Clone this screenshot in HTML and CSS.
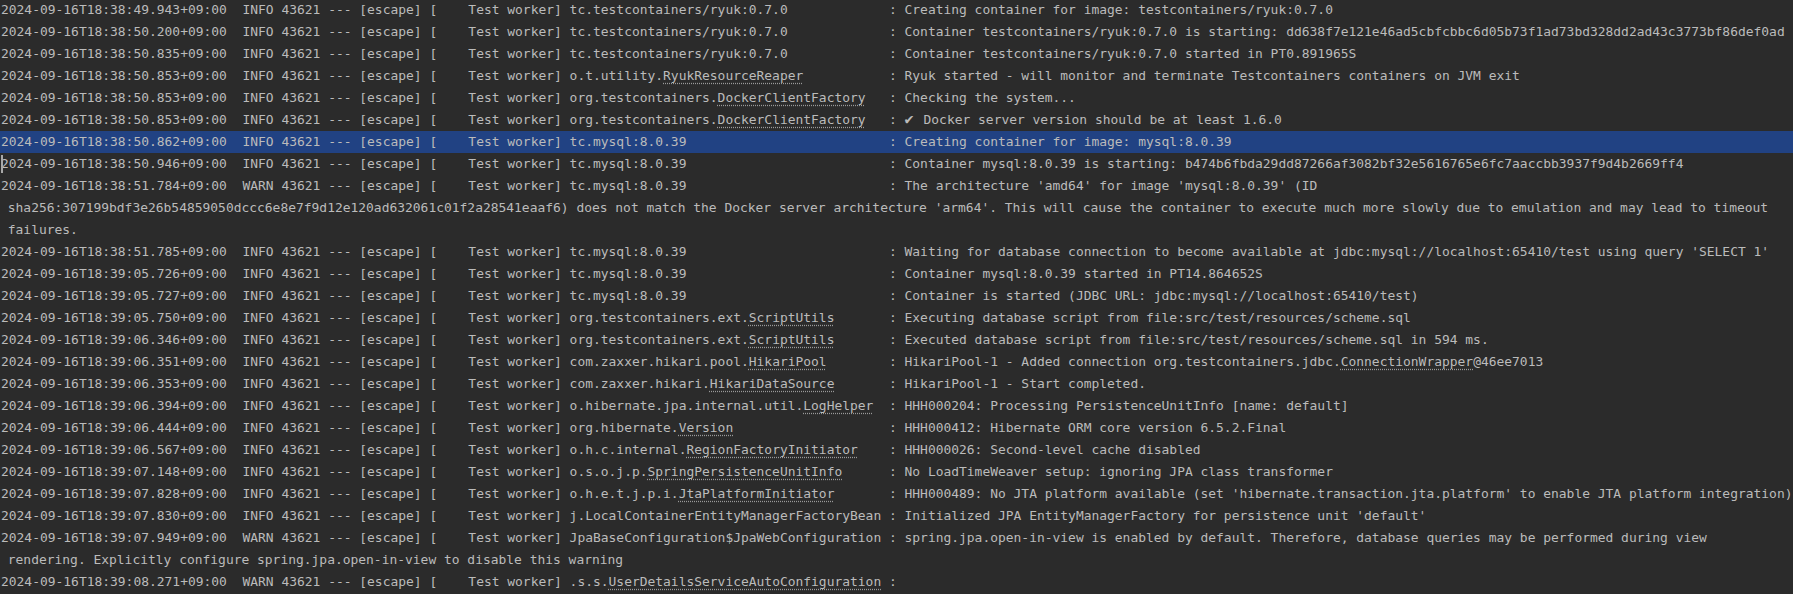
FILE: index.html
```html
<!DOCTYPE html>
<html lang="en">
<head>
<meta charset="utf-8">
<title>Test log</title>
<link rel="stylesheet" href="styles.css">
</head>
<body>
<main class="console">
<div class="row">2024-09-16T18:38:49.943+09:00  INFO 43621 --- [escape] [    Test worker] <span class="logger">tc.testcontainers/ryuk:0.7.0</span> : Creating container for image: testcontainers/ryuk:0.7.0</div>
<div class="row">2024-09-16T18:38:50.200+09:00  INFO 43621 --- [escape] [    Test worker] <span class="logger">tc.testcontainers/ryuk:0.7.0</span> : Container testcontainers/ryuk:0.7.0 is starting: dd638f7e121e46ad5cbfcbbc6d05b73f1ad73bd328dd2ad43c3773bf86def0ad</div>
<div class="row">2024-09-16T18:38:50.835+09:00  INFO 43621 --- [escape] [    Test worker] <span class="logger">tc.testcontainers/ryuk:0.7.0</span> : Container testcontainers/ryuk:0.7.0 started in PT0.891965S</div>
<div class="row">2024-09-16T18:38:50.853+09:00  INFO 43621 --- [escape] [    Test worker] <span class="logger">o.t.utility.<span class="cls">RyukResourceReaper</span></span> : Ryuk started - will monitor and terminate Testcontainers containers on JVM exit</div>
<div class="row">2024-09-16T18:38:50.853+09:00  INFO 43621 --- [escape] [    Test worker] <span class="logger">org.testcontainers.<span class="cls">DockerClientFactory</span></span> : Checking the system...</div>
<div class="row">2024-09-16T18:38:50.853+09:00  INFO 43621 --- [escape] [    Test worker] <span class="logger">org.testcontainers.<span class="cls">DockerClientFactory</span></span> : <span class="check">✔</span>Docker server version should be at least 1.6.0</div>
<div class="row selected">2024-09-16T18:38:50.862+09:00  INFO 43621 --- [escape] [    Test worker] <span class="logger">tc.mysql:8.0.39</span> : Creating container for image: mysql:8.0.39</div>
<div class="row caret">2024-09-16T18:38:50.946+09:00  INFO 43621 --- [escape] [    Test worker] <span class="logger">tc.mysql:8.0.39</span> : Container mysql:8.0.39 is starting: b474b6fbda29dd87266af3082bf32e5616765e6fc7aaccbb3937f9d4b2669ff4</div>
<div class="row">2024-09-16T18:38:51.784+09:00  WARN 43621 --- [escape] [    Test worker] <span class="logger">tc.mysql:8.0.39</span> : The architecture 'amd64' for image 'mysql:8.0.39' (ID</div>
<div class="row wrapped"> sha256:307199bdf3e26b54859050dccc6e8e7f9d12e120ad632061c01f2a28541eaaf6) does not match the Docker server architecture 'arm64'. This will cause the container to execute much more slowly due to emulation and may lead to timeout</div>
<div class="row wrapped"> failures.</div>
<div class="row">2024-09-16T18:38:51.785+09:00  INFO 43621 --- [escape] [    Test worker] <span class="logger">tc.mysql:8.0.39</span> : Waiting for database connection to become available at jdbc:mysql://localhost:65410/test using query 'SELECT 1'</div>
<div class="row">2024-09-16T18:39:05.726+09:00  INFO 43621 --- [escape] [    Test worker] <span class="logger">tc.mysql:8.0.39</span> : Container mysql:8.0.39 started in PT14.864652S</div>
<div class="row">2024-09-16T18:39:05.727+09:00  INFO 43621 --- [escape] [    Test worker] <span class="logger">tc.mysql:8.0.39</span> : Container is started (JDBC URL: jdbc:mysql://localhost:65410/test)</div>
<div class="row">2024-09-16T18:39:05.750+09:00  INFO 43621 --- [escape] [    Test worker] <span class="logger">org.testcontainers.ext.<span class="cls">ScriptUtils</span></span> : Executing database script from file:src/test/resources/scheme.sql</div>
<div class="row">2024-09-16T18:39:06.346+09:00  INFO 43621 --- [escape] [    Test worker] <span class="logger">org.testcontainers.ext.<span class="cls">ScriptUtils</span></span> : Executed database script from file:src/test/resources/scheme.sql in 594 ms.</div>
<div class="row">2024-09-16T18:39:06.351+09:00  INFO 43621 --- [escape] [    Test worker] <span class="logger">com.zaxxer.hikari.pool.<span class="cls">HikariPool</span></span> : HikariPool-1 - Added connection org.testcontainers.jdbc.<span class="cls">ConnectionWrapper</span>@46ee7013</div>
<div class="row">2024-09-16T18:39:06.353+09:00  INFO 43621 --- [escape] [    Test worker] <span class="logger">com.zaxxer.hikari.<span class="cls">HikariDataSource</span></span> : HikariPool-1 - Start completed.</div>
<div class="row">2024-09-16T18:39:06.394+09:00  INFO 43621 --- [escape] [    Test worker] <span class="logger">o.hibernate.jpa.internal.util.<span class="cls">LogHelper</span></span> : HHH000204: Processing PersistenceUnitInfo [name: default]</div>
<div class="row">2024-09-16T18:39:06.444+09:00  INFO 43621 --- [escape] [    Test worker] <span class="logger">org.hibernate.<span class="cls">Version</span></span> : HHH000412: Hibernate ORM core version 6.5.2.Final</div>
<div class="row">2024-09-16T18:39:06.567+09:00  INFO 43621 --- [escape] [    Test worker] <span class="logger">o.h.c.internal.<span class="cls">RegionFactoryInitiator</span></span> : HHH000026: Second-level cache disabled</div>
<div class="row">2024-09-16T18:39:07.148+09:00  INFO 43621 --- [escape] [    Test worker] <span class="logger">o.s.o.j.p.<span class="cls">SpringPersistenceUnitInfo</span></span> : No LoadTimeWeaver setup: ignoring JPA class transformer</div>
<div class="row">2024-09-16T18:39:07.828+09:00  INFO 43621 --- [escape] [    Test worker] <span class="logger">o.h.e.t.j.p.i.<span class="cls">JtaPlatformInitiator</span></span> : HHH000489: No JTA platform available (set 'hibernate.transaction.jta.platform' to enable JTA platform integration)</div>
<div class="row">2024-09-16T18:39:07.830+09:00  INFO 43621 --- [escape] [    Test worker] <span class="logger">j.LocalContainerEntityManagerFactoryBean</span> : Initialized JPA EntityManagerFactory for persistence unit 'default'</div>
<div class="row">2024-09-16T18:39:07.949+09:00  WARN 43621 --- [escape] [    Test worker] <span class="logger">JpaBaseConfiguration$JpaWebConfiguration</span> : spring.jpa.open-in-view is enabled by default. Therefore, database queries may be performed during view</div>
<div class="row wrapped"> rendering. Explicitly configure spring.jpa.open-in-view to disable this warning</div>
<div class="row">2024-09-16T18:39:08.271+09:00  WARN 43621 --- [escape] [    Test worker] <span class="logger">.s.s.<span class="cls">UserDetailsServiceAutoConfiguration</span></span> :</div>
</main>
</body>
</html>
```
FILE: styles.css
```css
html, body {
  margin: 0;
  height: 100%;
  background: #2b2b2b;
  overflow: hidden;
}
.console {
  margin-top: -1px;
  color: #bbbbbb;
  font-family: "DejaVu Sans Mono", "Liberation Mono", monospace;
  font-size: 12.955px;
  line-height: 22px;
}
.row {
  height: 22px;
  padding-left: 1px;
  white-space: pre;
  position: relative;
}
.wrapped {
  padding-left: 0;
}
.selected {
  background: #214283;
}
.caret::before {
  content: "";
  position: absolute;
  left: 1px;
  top: 2px;
  width: 2px;
  height: 18px;
  background: #a9a9a9;
}
.logger {
  display: inline-block;
  width: 40ch;
}
.cls {
  text-decoration: underline dotted #9a9a9a;
  text-underline-offset: 3px;
}
.check {
  display: inline-block;
  width: 19px;
  font-size: 15px;
  line-height: 1;
}
```
